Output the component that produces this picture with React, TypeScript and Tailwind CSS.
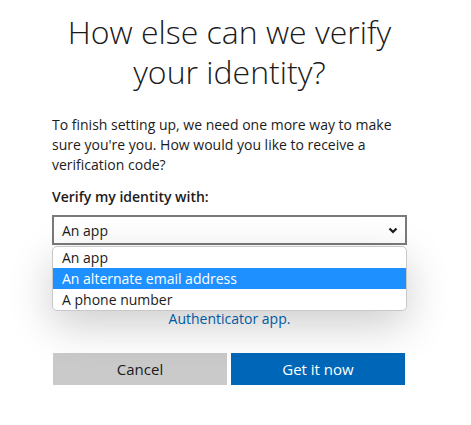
import React from "react";

export default function App() {
  const font = { fontFamily: '"Open Sans", "Noto Sans", sans-serif' };
  return (
    <div className="w-[471px] h-[425px] bg-white overflow-hidden" style={font}>
      <div className="ml-[52px] w-[355px] pt-[12px]">
        <h1 className="text-center text-[32px] leading-[40px] font-light text-[#1b1b1b]">
          How else can we verify
          <br />
          your identity?
        </h1>
        <p className="mt-[23px] text-[14px] leading-[20px] text-[#1b1b1b]">
          To finish setting up, we need one more way to make sure you're you. How would you like to receive a verification code?
        </p>
        <div className="mt-[12px] text-[14px] leading-[20px] font-semibold text-[#1b1b1b]">Verify my identity with:</div>
        <div className="relative mt-[8px]">
          <div className="h-[30px] border-2 border-[#7a7a7a] flex items-center justify-between pl-[8px] pr-[6px] text-[14px] text-[#1b1b1b]">
            <span>An app</span>
            <svg width="12" height="12" viewBox="0 0 12 12">
              <path d="M2.5 4.5 L6 8 L9.5 4.5" fill="none" stroke="#1b1b1b" strokeWidth="2.2" />
            </svg>
          </div>
          <div className="absolute left-0 top-[31px] w-[355px] bg-white border border-[#c8c8c8] rounded-[5px] overflow-hidden shadow-[0_14px_44px_rgba(0,0,0,0.2)] text-[14px] text-[#1b1b1b] z-10">
            <div className="h-[21px] leading-[21px] pl-[9px]">An app</div>
            <div className="h-[21px] leading-[21px] pl-[9px] bg-[#1e90ff] text-white">An alternate email address</div>
            <div className="h-[21px] leading-[21px] pl-[9px]">A phone number</div>
          </div>
          <p className="mt-[64px] text-center text-[14px] leading-[20px] text-[#0067b8]">Authenticator app.</p>
        </div>
        <div className="mt-[24px] ml-[1px] w-[352px] flex gap-[4px]">
          <button className="w-[174px] h-[32px] bg-[#cacaca] text-[15px] text-[#1b1b1b]">Cancel</button>
          <button className="w-[174px] h-[32px] bg-[#0067b8] text-[15px] text-white">Get it now</button>
        </div>
      </div>
    </div>
  );
}
